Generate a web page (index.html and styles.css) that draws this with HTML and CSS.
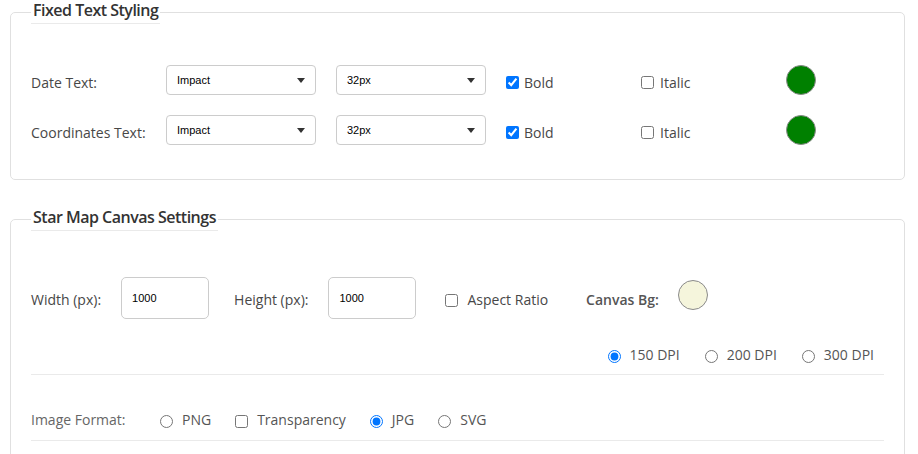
FILE: index.html
```html
<!DOCTYPE html>
<html>
<head>
<meta charset="utf-8">
<link rel="stylesheet" href="styles.css">
</head>
<body>
<div class="page">
  <fieldset class="card card-text">
    <legend class="card-title">Fixed Text Styling</legend>
    <div class="text-rows">
      <div class="text-row">
        <span class="lbl lbl-text">Date Text:</span>
        <span class="sel sel-font">Impact</span>
        <span class="sel sel-size">32px</span>
        <label class="chk chk-bold"><input type="checkbox" checked> Bold</label>
        <label class="chk chk-italic"><input type="checkbox"> Italic</label>
        <span class="swatch swatch-green"></span>
      </div>
      <div class="text-row">
        <span class="lbl lbl-text">Coordinates Text:</span>
        <span class="sel sel-font">Impact</span>
        <span class="sel sel-size">32px</span>
        <label class="chk chk-bold"><input type="checkbox" checked> Bold</label>
        <label class="chk chk-italic"><input type="checkbox"> Italic</label>
        <span class="swatch swatch-green"></span>
      </div>
    </div>
  </fieldset>

  <fieldset class="card card-canvas">
    <legend class="card-title">Star Map Canvas Settings</legend>
    <div class="size-row">
      <span class="lbl lbl-w">Width (px):</span>
      <span class="num">1000</span>
      <span class="lbl lbl-h">Height (px):</span>
      <span class="num">1000</span>
      <label class="chk chk-aspect"><input type="checkbox"> Aspect Ratio</label>
      <span class="lbl lbl-bg">Canvas Bg:</span>
      <span class="swatch swatch-bg"></span>
    </div>
    <div class="dpi-row">
      <label class="opt"><input type="radio" name="dpi" checked>150 DPI</label>
      <label class="opt"><input type="radio" name="dpi">200 DPI</label>
      <label class="opt"><input type="radio" name="dpi">300 DPI</label>
    </div>
    <div class="rule"></div>
    <div class="format-row">
      <span class="lbl-format">Image Format:</span>
      <label class="opt"><input type="radio" name="fmt">PNG</label>
      <label class="opt"><input type="checkbox">Transparency</label>
      <label class="opt"><input type="radio" name="fmt" checked>JPG</label>
      <label class="opt"><input type="radio" name="fmt">SVG</label>
    </div>
    <div class="rule"></div>
    <div class="spacer"></div>
  </fieldset>
</div>
</body>
</html>
```

FILE: styles.css
```css
html, body {
  margin: 0;
  padding: 0;
  background: #fff;
}
body {
  font-family: "Open Sans", "Liberation Sans", sans-serif;
  font-size: 14px;
  color: #555;
  overflow: hidden;
}
.page {
  padding: 0 13px 0 10px;
}
.card {
  margin: 0;
  border: 1px solid #e0e0e0;
  border-radius: 5px;
  padding: 0 20px;
  min-width: 0;
}
.card-canvas {
  margin-top: 27px;
}
.card-title {
  padding: 0 2px 3px 2px;
  border-bottom: 1px solid #eaeaea;
  font-size: 16px;
  font-weight: 600;
  letter-spacing: -0.5px;
  line-height: 20px;
  color: #333;
}
.text-rows {
  padding: 41px 0 34px 0;
}
.text-row {
  display: flex;
  align-items: center;
  height: 30px;
}
.text-row + .text-row {
  margin-top: 20px;
}
.lbl {
  color: #474747;
  line-height: 20px;
}
.lbl-text {
  width: 135px;
  padding-top: 5px;
}
.sel {
  position: relative;
  box-sizing: border-box;
  width: 150px;
  height: 30px;
  border: 1px solid #ccc;
  border-radius: 4px;
  padding: 0 10px;
  font-family: "Liberation Sans", Arial, sans-serif;
  font-size: 11px;
  line-height: 28px;
  color: #000;
}
.sel::after {
  content: "";
  position: absolute;
  right: 10px;
  top: 12px;
  border-left: 4px solid transparent;
  border-right: 4px solid transparent;
  border-top: 5px solid #333;
}
.sel-size {
  margin-left: 20px;
}
.chk {
  display: flex;
  align-items: center;
  line-height: 20px;
  padding-top: 5px;
  color: #474747;
}
.chk input {
  margin: 0 5px 0 0;
  width: 13px;
  height: 13px;
}
.chk-bold {
  margin-left: 20px;
  width: 135px;
}
.chk-italic {
  width: 145px;
}
.chk-italic input {
  margin-right: 6px;
}
.swatch {
  box-sizing: border-box;
  width: 30px;
  height: 30px;
  border-radius: 50%;
  border: 1px solid #8a8a8a;
}
.swatch-green {
  background: #008000;
}
.swatch-bg {
  background: #f5f5dc;
  margin-left: 19px;
  margin-top: -6px;
}
.size-row {
  display: flex;
  align-items: center;
  margin-top: 46px;
  height: 42px;
}
.size-row .lbl {
  padding-top: 4px;
}
.num {
  box-sizing: border-box;
  width: 88px;
  height: 42px;
  border: 1px solid #ccc;
  border-radius: 5px;
  padding: 0 10px;
  font-family: "Liberation Sans", Arial, sans-serif;
  font-size: 11px;
  line-height: 40px;
  color: #000;
  margin-left: 20px;
}
.lbl-h {
  margin-left: 25px;
}
.chk-aspect {
  margin-left: 29px;
  padding-top: 4px;
}
.chk-aspect input {
  margin-right: 9px;
}
.lbl-bg {
  margin-left: 38px;
  font-weight: 600;
  color: #555;
}
.dpi-row {
  display: flex;
  justify-content: flex-end;
  gap: 25px;
  margin-top: 26px;
  height: 20px;
  padding-right: 10px;
}
.opt {
  display: flex;
  align-items: center;
  line-height: 20px;
  color: #555;
}
.opt input {
  margin: 3px 9px 0 0;
  width: 13px;
  height: 13px;
}
.rule {
  height: 1px;
  background: #eaeaea;
}
.dpi-row + .rule {
  margin-top: 9px;
}
.format-row {
  display: flex;
  align-items: center;
  gap: 24px;
  margin-top: 35px;
  height: 20px;
}
.format-row + .rule {
  margin-top: 10px;
}
.lbl-format {
  width: 105px;
  color: #666;
  line-height: 20px;
}
.spacer {
  height: 40px;
}
```
